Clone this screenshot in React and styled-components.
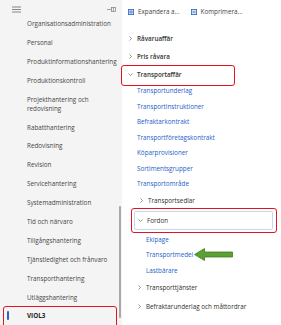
import React from "react";
import styled, { createGlobalStyle } from "styled-components";

const GlobalStyle = createGlobalStyle`
  html, body { margin: 0; padding: 0; }
  body {
    font-family: "Open Sans", "Noto Sans", sans-serif;
    width: 281px;
    height: 325px;
    overflow: hidden;
    background: #ffffff;
  }
`;

const Page = styled.div`
  display: flex;
  width: 281px;
  height: 325px;
  overflow: hidden;
`;

const NavPane = styled.nav`
  position: relative;
  width: 122px;
  flex-shrink: 0;
  background: #f4f4f4;
  display: flex;
  flex-direction: column;
`;

const NavHeader = styled.div`
  height: 14.5px;
  flex-shrink: 0;
  display: flex;
  align-items: flex-end;
  justify-content: space-between;
  padding: 0 6px 0 12px;
  box-sizing: border-box;
`;

const IconSlot = styled.span`
  display: flex;
  align-items: center;
  height: 10px;
  margin-bottom: ${(p) => p.$mb || 0}px;
`;

const NavItem = styled.div`
  position: relative;
  height: ${(p) => (p.$double ? 27.5 : 18.9)}px;
  display: flex;
  align-items: center;
  padding-left: 27px;
  padding-right: 8px;
  font-size: 6.3px;
  line-height: 9px;
  color: ${(p) => (p.$selected ? "#201f1e" : "#484644")};
  font-weight: ${(p) => (p.$selected ? 700 : 400)};
  white-space: ${(p) => (p.$double ? "normal" : "nowrap")};
  flex-shrink: 0;
`;

const SelectBar = styled.span`
  position: absolute;
  left: 7px;
  top: 5px;
  width: 2px;
  height: 9px;
  border-radius: 1px;
  background: #2f5fbf;
`;

const RedMark = styled.span`
  position: absolute;
  box-sizing: border-box;
  border: 1.5px solid #e3141f;
  border-radius: 3px;
  pointer-events: none;
  left: ${(p) => p.$l}px;
  top: ${(p) => p.$t}px;
  width: ${(p) => (p.$w ? `${p.$w}px` : "auto")};
  right: ${(p) => (p.$r !== undefined ? `${p.$r}px` : "auto")};
  height: ${(p) => p.$h}px;
`;

const FocusRing = styled.span`
  position: absolute;
  box-sizing: border-box;
  left: 12px;
  right: 8px;
  top: 2.5px;
  bottom: 1.5px;
  border: 1px solid #c9d6ec;
  border-radius: 2px;
`;

const ScrollThumb = styled.span`
  position: absolute;
  right: 1px;
  top: 206px;
  width: 2.5px;
  height: 112px;
  border-radius: 2px;
  background: #a9a9a9;
`;

const MainPane = styled.main`
  flex: 1;
  display: flex;
  flex-direction: column;
  background: #ffffff;
  min-width: 0;
`;

const Toolbar = styled.div`
  height: 29px;
  flex-shrink: 0;
  display: flex;
  align-items: center;
  gap: 11px;
  padding: 0 0 6px 6px;
  box-sizing: border-box;
`;

const ToolButton = styled.div`
  display: flex;
  align-items: center;
  gap: 4px;
  font-size: 6.3px;
  color: #484644;
  white-space: nowrap;
`;

const Tree = styled.div`
  flex: 1;
  display: flex;
  flex-direction: column;
  border-left: 1px solid #e8e8e8;
  margin-left: -1px;
`;

const TreeRow = styled.div`
  position: relative;
  height: ${(p) => p.$h}px;
  flex-shrink: 0;
  display: flex;
  align-items: center;
  padding-left: ${(p) => p.$indent}px;
  font-size: 6.3px;
  white-space: nowrap;
  color: ${(p) => (p.$link ? "#2461c7" : "#323130")};
  font-weight: ${(p) => (p.$strong ? 600 : 400)};
`;

const Chevron = styled.span`
  display: inline-flex;
  width: 9px;
  justify-content: flex-start;
  align-items: center;
  flex-shrink: 0;
`;

const Label = styled.span`
  position: relative;
`;

const ArrowMark = styled.svg`
  position: absolute;
  left: calc(100% + 1px);
  top: 50%;
  margin-top: -6.5px;
`;

const Hamburger = () => (
  <svg width="9" height="7" viewBox="0 0 9 7">
    <g stroke="#7a7a7a" strokeWidth="0.9">
      <line x1="0" y1="1" x2="9" y2="1" />
      <line x1="0" y1="3.5" x2="9" y2="3.5" />
      <line x1="0" y1="6" x2="9" y2="6" />
    </g>
  </svg>
);

const PinIcon = () => (
  <svg width="9" height="5" viewBox="0 0 9 5">
    <g stroke="#8a8a8a" strokeWidth="0.8" fill="none">
      <line x1="0" y1="2.5" x2="4" y2="2.5" />
      <rect x="4.4" y="0.5" width="4" height="4" />
      <line x1="6.4" y1="0.5" x2="6.4" y2="4.5" />
    </g>
  </svg>
);

const BoxIcon = ({ collapse }) => (
  <svg width="6" height="6" viewBox="0 0 6 6">
    <rect x="0.4" y="0.4" width="5.2" height="5.2" fill="#d5e3f7" stroke="#2f62c0" strokeWidth="0.8" />
    <line x1="1.5" y1={collapse ? 3 : 2.2} x2="4.5" y2={collapse ? 3 : 2.2} stroke="#2f62c0" strokeWidth="0.8" />
    {!collapse && <line x1="1.5" y1="3.8" x2="4.5" y2="3.8" stroke="#2f62c0" strokeWidth="0.8" />}
  </svg>
);

const ChevronIcon = ({ open }) => (
  <svg width="5" height="5" viewBox="0 0 5 5">
    {open ? (
      <polyline points="0.5,1.5 2.5,3.5 4.5,1.5" fill="none" stroke="#6b6a69" strokeWidth="0.7" />
    ) : (
      <polyline points="1.5,0.5 3.5,2.5 1.5,4.5" fill="none" stroke="#6b6a69" strokeWidth="0.7" />
    )}
  </svg>
);

const GreenArrow = () => (
  <ArrowMark width="40" height="13" viewBox="0 0 40 13">
    <polygon
      points="0.5,6.5 10.5,0.5 10.5,4 38.5,4 38.5,9 10.5,9 10.5,12.5"
      fill="#5c9f33"
      stroke="#3f7d1f"
      strokeWidth="0.8"
      strokeLinejoin="round"
    />
  </ArrowMark>
);

const navItems = [
  "Organisationsadministration",
  "Personal",
  "Produktinformationshantering",
  "Produktionskontroll",
  { text: "Projekthantering och redovisning", double: true },
  "Rabatthantering",
  "Redovisning",
  "Revision",
  "Servicehantering",
  "Systemadministration",
  "Tid och närvaro",
  "Tillgångshantering",
  "Tjänstledighet och frånvaro",
  "Transporthantering",
  "Utläggshantering",
];

const transportLinks = [
  "Transportunderlag",
  "Transportinstruktioner",
  "Befraktarkontrakt",
  "Transportföretagskontrakt",
  "Köparprovisioner",
  "Sortimentsgrupper",
  "Transportområde",
];

export default function App() {
  return (
    <>
      <GlobalStyle />
      <Page>
        <NavPane>
          <NavHeader>
            <IconSlot $mb={0}>
              <Hamburger />
            </IconSlot>
            <IconSlot $mb={0}>
              <PinIcon />
            </IconSlot>
          </NavHeader>
          {navItems.map((it) => {
            const text = typeof it === "string" ? it : it.text;
            const double = typeof it !== "string" && it.double;
            return (
              <NavItem key={text} $double={double}>
                {text}
              </NavItem>
            );
          })}
          <NavItem $selected>
            <SelectBar />
            VIOL3
            <RedMark $l={3} $t={0} $w={114} $h={22} />
          </NavItem>
          <ScrollThumb />
        </NavPane>

        <MainPane>
          <Toolbar>
            <ToolButton>
              <BoxIcon />
              Expandera a...
            </ToolButton>
            <ToolButton>
              <BoxIcon collapse />
              Komprimera...
            </ToolButton>
          </Toolbar>
          <Tree>
            <TreeRow $h={18} $indent={6} $strong>
              <Chevron>
                <ChevronIcon />
              </Chevron>
              Råvaruaffär
            </TreeRow>
            <TreeRow $h={18} $indent={6} $strong>
              <Chevron>
                <ChevronIcon />
              </Chevron>
              Pris råvara
            </TreeRow>
            <TreeRow $h={18} $indent={6} $strong>
              <Chevron>
                <ChevronIcon open />
              </Chevron>
              Transportaffär
              <RedMark $l={-1} $t={0} $w={114} $h={21} />
            </TreeRow>
            {transportLinks.map((t) => (
              <TreeRow key={t} $h={15.5} $indent={15} $link>
                {t}
              </TreeRow>
            ))}
            <TreeRow $h={17} $indent={17}>
              <Chevron>
                <ChevronIcon />
              </Chevron>
              Transportsedlar
            </TreeRow>
            <TreeRow $h={23} $indent={16}>
              <FocusRing />
              <Chevron>
                <ChevronIcon open />
              </Chevron>
              Fordon
              <RedMark $l={9} $r={4} $t={-0.5} $h={25} />
            </TreeRow>
            <TreeRow $h={15.5} $indent={24} $link>
              Ekipage
            </TreeRow>
            <TreeRow $h={15.5} $indent={24} $link>
              <Label>
                Transportmedel
                <GreenArrow />
              </Label>
            </TreeRow>
            <TreeRow $h={15.5} $indent={24} $link>
              Lastbärare
            </TreeRow>
            <TreeRow $h={19} $indent={15}>
              <Chevron>
                <ChevronIcon />
              </Chevron>
              Transporttjänster
            </TreeRow>
            <TreeRow $h={19} $indent={15}>
              <Chevron>
                <ChevronIcon />
              </Chevron>
              Befraktarunderlag och måttordrar
            </TreeRow>
          </Tree>
        </MainPane>
      </Page>
    </>
  );
}
